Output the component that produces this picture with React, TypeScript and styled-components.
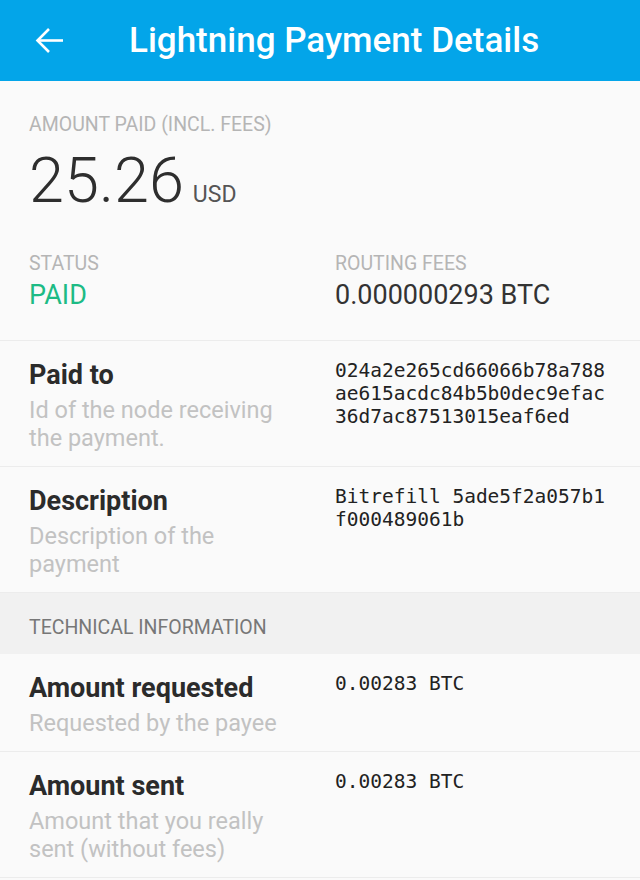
import styled, { createGlobalStyle } from "styled-components";

const GlobalStyle = createGlobalStyle`
  html, body {
    margin: 0;
    padding: 0;
    background: #fafafa;
    font-family: Roboto, "Noto Sans", sans-serif;
  }
`

type Detail = {
    title: string
    hint: string
    value: string
}

const details: Detail[] = [
    {
        title: "Paid to",
        hint: "Id of the node receiving the payment.",
        value: "024a2e265cd66066b78a788ae615acdc84b5b0dec9efac36d7ac87513015eaf6ed",
    },
    {
        title: "Description",
        hint: "Description of the payment",
        value: "Bitrefill 5ade5f2a057b1f000489061b",
    },
]

const technical: Detail[] = [
    {title: "Amount requested", hint: "Requested by the payee", value: "0.00283 BTC"},
    {title: "Amount sent", hint: "Amount that you really sent (without fees)", value: "0.00283 BTC"},
]

const BackArrow = () => (
    <svg width="29" height="27" viewBox="0 0 29 27" fill="none" stroke="#fff" strokeWidth="2.6">
        <path d="M3 13.5H28"/>
        <path d="M14 2L2.5 13.5L14 25"/>
    </svg>
)

const DetailRow = ({title, hint, value}: Detail) => (
    <Row>
        <div>
            <RowTitle>{title}</RowTitle>
            <RowHint>{hint}</RowHint>
        </div>
        <Mono>{value}</Mono>
    </Row>
)

export default function App() {
    return (
        <Page>
            <GlobalStyle/>
            <Toolbar>
                <BackButton><BackArrow/></BackButton>
                <ToolbarTitle>Lightning Payment Details</ToolbarTitle>
            </Toolbar>
            <Summary>
                <Label>Amount paid (incl. fees)</Label>
                <Amount>
                    <Big>25.26</Big>
                    <Unit>USD</Unit>
                </Amount>
                <Stats>
                    <div>
                        <Label>Status</Label>
                        <StatValue $paid>PAID</StatValue>
                    </div>
                    <div>
                        <Label>Routing fees</Label>
                        <StatValue>0.000000293 BTC</StatValue>
                    </div>
                </Stats>
            </Summary>
            {details.map(d => <DetailRow key={d.title} {...d}/>)}
            <SectionHeader>Technical information</SectionHeader>
            {technical.map(d => <DetailRow key={d.title} {...d}/>)}
        </Page>
    );
}

const Page = styled.div`
  width: 640px;
  min-height: 880px;
  background: #fafafa;
`

const Toolbar = styled.div`
  height: 81px;
  background: #03a5e9;
  display: flex;
  align-items: center;
`

const BackButton = styled.div`
  width: 100px;
  padding-left: 35px;
  box-sizing: border-box;
  display: flex;
  align-items: center;
`

const ToolbarTitle = styled.h1`
  margin: 0 0 0 29px;
  color: #fff;
  font-size: 35px;
  font-weight: 500;
  line-height: 41px;
`

const Summary = styled.div`
  padding: 32px 29px 29px;
  border-bottom: 1px solid #ececec;
`

const Label = styled.div`
  font-size: 19.5px;
  line-height: 24px;
  text-transform: uppercase;
  color: #b5b5b5;
`

const Amount = styled.div`
  display: flex;
  align-items: baseline;
  margin-top: 4px;
`

const Big = styled.span`
  font-size: 63px;
  font-weight: 300;
  color: #2e2e2e;
  line-height: 80px;
`

const Unit = styled.span`
  font-size: 23px;
  color: #555;
  margin-left: 9px;
`

const Stats = styled.div`
  display: grid;
  grid-template-columns: 306px 1fr;
  margin-top: 31px;
`

const StatValue = styled.div<{ $paid?: boolean }>`
  font-size: 27px;
  line-height: 32px;
  margin-top: 3px;
  color: ${p => p.$paid ? "#1dbb85" : "#333"};
`

const Row = styled.div`
  display: grid;
  grid-template-columns: 272px 1fr;
  column-gap: 34px;
  padding: 18px 29px 14px;
  border-bottom: 1px solid #ececec;
`

const RowTitle = styled.div`
  font-size: 27px;
  font-weight: 700;
  color: #2b2b2b;
  line-height: 32px;
`

const RowHint = styled.div`
  font-size: 23.5px;
  color: #c2c2c2;
  line-height: 28px;
  margin-top: 5px;
`

const Mono = styled.div`
  font-family: "DejaVu Sans Mono", "Liberation Mono", monospace;
  font-size: 19.5px;
  line-height: 23px;
  color: #222;
  word-break: break-all;
`

const SectionHeader = styled.div`
  background: #f1f1f1;
  padding: 23px 29px 14px;
  font-size: 19.5px;
  line-height: 24px;
  text-transform: uppercase;
  color: #777;
`
